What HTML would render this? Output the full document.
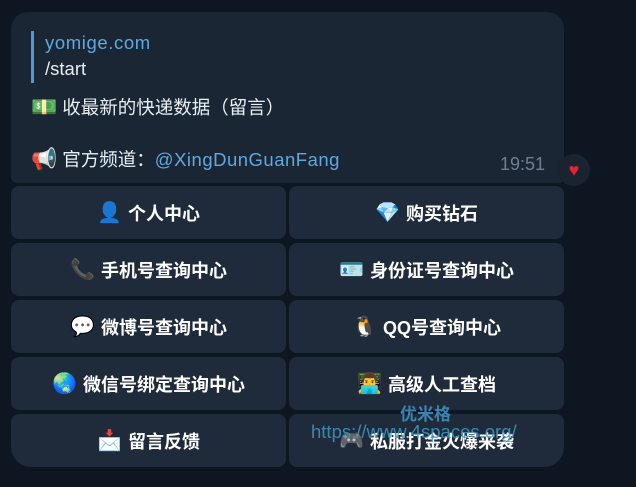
<!DOCTYPE html>
<html><head><meta charset="utf-8"><style>
*{margin:0;padding:0;box-sizing:border-box}
body{width:636px;height:487px;background:#0e1621;font-family:"Liberation Sans","Noto Sans CJK SC",sans-serif;position:relative;overflow:hidden;color:#fff}
.bubble{position:absolute;left:11px;top:12px;width:553px;height:171px;background:#1a2634;border-radius:17px 17px 6px 6px}
.quote{position:absolute;left:31px;top:31px;width:3px;height:52px;background:#4f9ad6}
.t{position:absolute;font-size:18.5px;white-space:nowrap}
.em{font-size:21px}
.btn{position:absolute;background:#1f2b3a;border-radius:8px;display:flex;align-items:center;justify-content:center;font-weight:bold;font-size:18px;color:#fff}
.btn span.e{margin-right:6px;font-weight:normal;font-size:20px}
.heart{position:absolute;left:558px;top:154px;width:32px;height:32px;border-radius:50%;background:#1a2430;color:#e8232f;text-align:center;line-height:32px;font-size:18px}
</style></head><body>
<div class="bubble"></div>
<div class="quote"></div>
<div class="t" style="left:45px;top:32px;color:#5fa8e0;letter-spacing:0.6px">yomige.com</div>
<div class="t" style="left:45px;top:58px;color:#e8eef4">/start</div>
<div class="t" style="left:31px;top:94px;color:#e8eef4"><span class="em">💵</span> 收最新的快递数据（留言）</div>
<div class="t" style="left:31px;top:146px;color:#e8eef4"><span class="em">📢</span> 官方频道：<span style="color:#5fa8e0;letter-spacing:0.5px">@XingDunGuanFang</span></div>
<div class="t" style="left:500px;top:154px;color:#6d7f91;font-size:18px">19:51</div>
<div class="heart">♥</div>

<div class="btn" style="left:11px;top:186px;width:275px;height:53px"><span class="e">👤</span>个人中心</div>
<div class="btn" style="left:289px;top:186px;width:275px;height:53px"><span class="e">💎</span>购买钻石</div>
<div class="btn" style="left:11px;top:243px;width:275px;height:53px"><span class="e">📞</span>手机号查询中心</div>
<div class="btn" style="left:289px;top:243px;width:275px;height:53px"><span class="e">🪪</span>身份证号查询中心</div>
<div class="btn" style="left:11px;top:300px;width:275px;height:53px"><span class="e">💬</span>微博号查询中心</div>
<div class="btn" style="left:289px;top:300px;width:275px;height:53px"><span class="e">🐧</span>QQ号查询中心</div>
<div class="btn" style="left:11px;top:357px;width:275px;height:53px"><span class="e">🌏</span>微信号绑定查询中心</div>
<div class="btn" style="left:289px;top:357px;width:275px;height:53px"><span class="e">👨‍💻</span>高级人工查档</div>
<div class="btn" style="left:11px;top:414px;width:275px;height:53px;border-radius:8px 8px 8px 20px"><span class="e">📩</span>留言反馈</div>
<div class="btn" style="left:289px;top:414px;width:275px;height:53px;border-radius:8px 8px 20px 8px"><span class="e">🎮</span>私服打金火爆来袭</div>

<div class="t" style="left:400px;top:400px;color:#3d8fbf;font-size:17px;font-weight:bold;opacity:.9">优米格</div>
<div class="t" style="left:311px;top:421px;color:#3d9ac8;font-size:18.5px;opacity:.85">https://www.4spaces.org/</div>
</body></html>
